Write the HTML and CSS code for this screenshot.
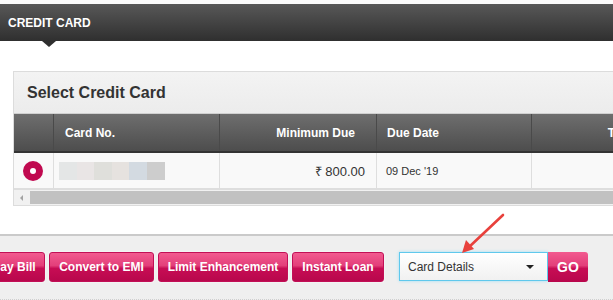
FILE: index.html
```html
<!DOCTYPE html>
<html>
<head>
<meta charset="utf-8">
<link rel="stylesheet" href="styles.css">
</head>
<body>
<div class="page">
  <div class="topstrip"></div>
  <div class="header">
    <span class="title">CREDIT CARD</span>
    <span class="pointer"></span>
  </div>
  <div class="panel">
    <div class="panel-title">Select Credit Card</div>
    <div class="thead">
      <div class="c c1"></div>
      <div class="c c2">Card No.</div>
      <div class="c c3 right">Minimum Due</div>
      <div class="c c4">Due Date</div>
      <div class="c c5"><span class="cut">T</span></div>
    </div>
    <div class="trow">
      <div class="c c1"><span class="radio"><span class="dot"></span></span></div>
      <div class="c c2">
        <div class="blur">
          <span class="b b1"></span><span class="b b2"></span><span class="b b3"></span><span class="b b4"></span><span class="b b5"></span><span class="b b6"></span>
        </div>
      </div>
      <div class="c c3 right amount">₹ 800.00</div>
      <div class="c c4 date">09 Dec '19</div>
      <div class="c c5"></div>
    </div>
    <div class="scrollbar">
      <span class="sarrow"></span>
      <span class="thumb"></span>
    </div>
  </div>
  <div class="actions">
    <div class="btns">
      <button class="btn pay">Pay Bill</button>
      <button class="btn emi">Convert to EMI</button>
      <button class="btn limit">Limit Enhancement</button>
      <button class="btn loan">Instant Loan</button>
      <div class="select">
        <span>Card Details</span>
        <span class="caret"></span>
      </div>
      <button class="go">GO</button>
    </div>
  </div>
  <svg class="annot" width="613" height="300" viewBox="0 0 613 300">
    <line x1="503" y1="215" x2="468" y2="248" stroke="#e8413c" stroke-width="2.6" stroke-linecap="round"/>
    <polygon points="462,253 466,240 474,249" fill="#e8413c"/>
  </svg>
</div>
</body>
</html>
```
FILE: styles.css
```css
html, body {
  margin: 0;
  padding: 0;
  background: #ffffff;
}
.page {
  position: relative;
  width: 613px;
  height: 300px;
  overflow: hidden;
  font-family: "Liberation Sans", Arial, sans-serif;
}
.topstrip {
  height: 4px;
  background: #fbfbfb;
}
.header {
  position: relative;
  height: 37px;
  background: linear-gradient(#585858, #2f2f2f);
  display: flex;
  align-items: center;
  padding-left: 8px;
}
.title {
  color: #ffffff;
  font-weight: bold;
  font-size: 12px;
}
.pointer {
  position: absolute;
  left: 42px;
  top: 37px;
  width: 0;
  height: 0;
  border-left: 7px solid transparent;
  border-right: 7px solid transparent;
  border-top: 6px solid #2f2f2f;
}
.panel {
  margin-top: 30px;
  margin-left: 13px;
  width: 720px;
  border: 1px solid #dcdcdc;
  border-right: none;
  background: #f7f7f7;
}
.panel-title {
  height: 41px;
  display: flex;
  align-items: center;
  padding-left: 13px;
  font-size: 16px;
  font-weight: bold;
  color: #333333;
  background: linear-gradient(#f3f3f3, #ececec);
}
.thead {
  display: flex;
  height: 37px;
  background: linear-gradient(#6e6e6e, #4d4d4d);
  border-top: 1px solid #d0d0d0;
  border-bottom: 2px solid #333333;
  color: #ffffff;
  font-weight: bold;
  font-size: 12px;
}
.thead .c {
  border-right: 1px solid #4a4a4a;
}
.c {
  display: flex;
  align-items: center;
  box-sizing: border-box;
  padding: 0 10px;
}
.c1 { width: 40px; }
.c2 { width: 166px; }
.c3 { width: 157px; }
.c4 { width: 155px; }
.c5 { width: 200px; justify-content: flex-end; }
.right { justify-content: flex-end; }
.cut { margin-right: 106px; }
.thead .c2 { padding-left: 11px; }
.thead .c3 { padding-right: 21px; }
.thead .c4 { padding-left: 10px; }
.trow {
  display: flex;
  height: 35px;
  background: #f9f9f9;
  border-bottom: 2px solid #dedede;
}
.trow .c {
  border-right: 1px solid #dedede;
}
.trow .c1 { padding-left: 9px; }
.radio {
  width: 20px;
  height: 20px;
  border-radius: 50%;
  background: #c0094f;
  display: flex;
  align-items: center;
  justify-content: center;
}
.dot {
  width: 6px;
  height: 6px;
  border-radius: 50%;
  background: #ffffff;
}
.trow .c2 { padding-left: 5px; }
.blur {
  display: flex;
  height: 18px;
}
.b { width: 17.6px; height: 18px; }
.b1 { background: #e4e6e6; }
.b2 { background: #e9e5e5; }
.b3 { background: #dfdfdb; }
.b4 { background: #e6e2df; }
.b5 { background: #d3dae1; }
.b6 { background: #cdcdcd; }
.amount {
  font-size: 13px;
  color: #333333;
  padding-right: 11px;
}
.date {
  font-size: 11px;
  color: #333333;
  padding-left: 9px;
}
.scrollbar {
  display: flex;
  align-items: center;
  height: 15px;
  background: #f1f1f1;
}
.sarrow {
  width: 0;
  height: 0;
  margin-left: 6px;
  margin-right: 7px;
  border-top: 3px solid transparent;
  border-bottom: 3px solid transparent;
  border-right: 3px solid #a3a3a3;
}
.thumb {
  flex: 1;
  height: 13px;
  background: #c1c1c1;
}
.actions {
  margin-top: 28px;
  height: 66px;
  border-top: 2px solid #cacaca;
  background: #efefef;
  position: relative;
}
.actions::after {
  content: "";
  position: absolute;
  left: 0;
  right: 0;
  bottom: 2px;
  border-bottom: 1px dotted #cfcfcf;
}
.btns {
  display: flex;
  align-items: flex-start;
  margin-top: 16px;
  margin-left: -17px;
}
.btn {
  box-sizing: border-box;
  height: 30px;
  margin-right: 4px;
  border: 1px solid #c20f56;
  border-radius: 3px;
  background: linear-gradient(#f25a8f 0%, #e33f7a 45%, #c70d54 55%, #b8074c 100%);
  color: #ffffff;
  font-family: "Liberation Sans", Arial, sans-serif;
  font-weight: bold;
  font-size: 12px;
  padding: 0;
  white-space: nowrap;
  text-align: center;
  box-shadow: 0 0 0 1px #f3f3f3;
}
.pay { width: 62px; }
.emi { width: 105px; }
.limit { width: 130px; }
.loan { width: 92px; }
.select {
  margin-left: 11px;
  width: 149px;
  height: 29px;
  box-sizing: border-box;
  border: 1px solid #5fc8ec;
  box-shadow: 0 0 3px #9fe0f6;
  background: linear-gradient(#ffffff, #f1f1f1);
  display: flex;
  align-items: center;
  justify-content: space-between;
  padding: 0 13px 0 8px;
  font-size: 12px;
  color: #333333;
}
.caret {
  width: 0;
  height: 0;
  border-left: 4px solid transparent;
  border-right: 4px solid transparent;
  border-top: 4px solid #222222;
}
.go {
  width: 40px;
  height: 30px;
  border: none;
  border-radius: 0 3px 3px 0;
  background: linear-gradient(#f25a8f 0%, #e33f7a 45%, #c70d54 55%, #b8074c 100%);
  color: #ffffff;
  font-family: "Liberation Sans", Arial, sans-serif;
  font-weight: bold;
  font-size: 14px;
  padding: 0;
}
.annot {
  position: absolute;
  left: 0;
  top: 0;
  pointer-events: none;
}
```
